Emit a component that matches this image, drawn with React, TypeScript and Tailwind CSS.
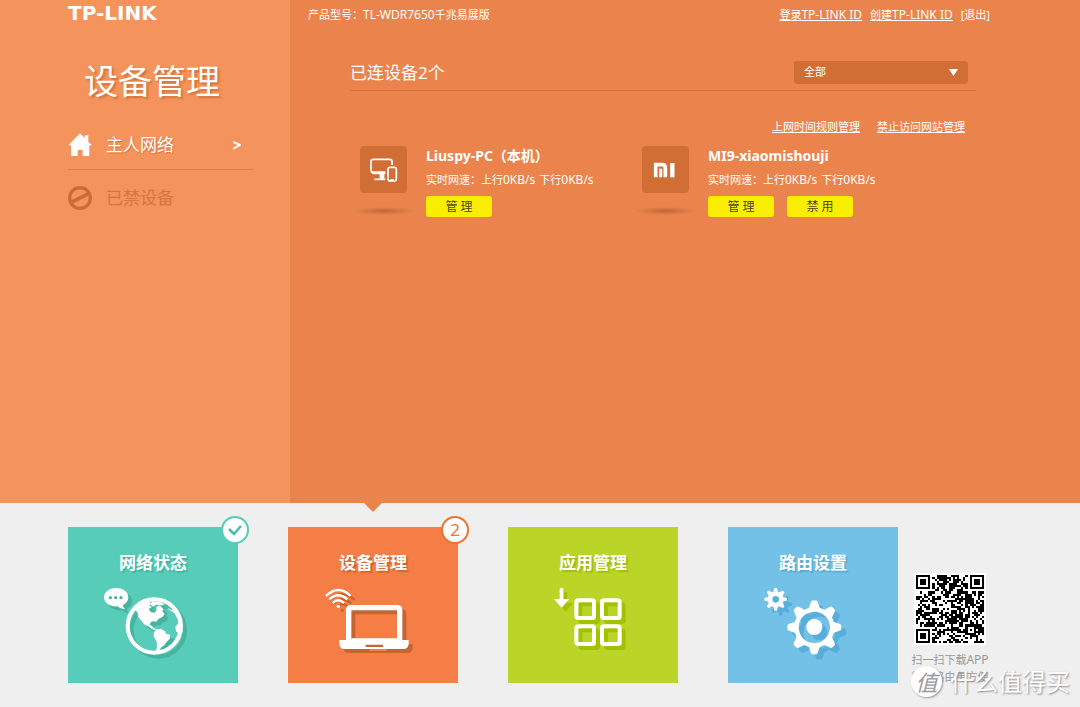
import { useState } from 'react';

import clsx from 'clsx';

// -----------------------------------------------------------------------------
// Icons
// -----------------------------------------------------------------------------

const HomeIcon = () => (
  <svg className="h-6 w-6" viewBox="85 398 72 72" fill="#fff" aria-hidden="true">
    <path d="M121 399 L135 413 V405 H146 V424 L157 435 H149 V467 H129 V449 H114 V467 H94 V435 H86 Z" />
  </svg>
);

const BanIcon = () => (
  <svg className="h-6 w-6" viewBox="0 0 72 72" fill="none" stroke="#ca6d34" aria-hidden="true">
    <circle cx="36" cy="36" r="31" strokeWidth="10" />
    <path d="M10 49 L62 23" strokeWidth="11" />
  </svg>
);

const ComputerIcon = () => (
  <svg className="h-full w-full" viewBox="60 46 141 141" fill="none" stroke="#fff" aria-hidden="true">
    <path d="M156 103 V93 Q156 86 149 86 H100 Q93 86 93 93 V119 Q93 126 100 127 H136" strokeWidth="5" />
    <path d="M95 122 H136 V131 H101 Q95 131 95 122 Z M119 130 H133 V144 H119 Z" fill="#fff" stroke="none" />
    <path d="M103 146 H136" strokeWidth="5" />
    <rect x="144" y="110" width="25" height="41" rx="6" strokeWidth="5" />
    <path d="M151 148 H162" strokeWidth="5" />
  </svg>
);

const MiIcon = () => (
  <svg className="h-full w-full" viewBox="69 46 141 141" fill="none" stroke="#fff" aria-hidden="true">
    <path d="M110 140 V102 H130 Q139 102 139 112 V140" strokeWidth="11" />
    <path d="M125 114 V140" strokeWidth="9" />
    <path d="M160 97 V140" strokeWidth="13" />
  </svg>
);

const GlobeIcon = () => (
  <svg
    className="h-20 w-[120px] drop-shadow-[4px_4px_0_#47b49f]"
    viewBox="129 276 360 240"
    fill="#fff"
    aria-hidden="true"
  >
    <path
      fillRule="evenodd"
      d="M198 294 C219 294 235 306 235 322 C235 332 229 340 219 345 C219 350 221 354 226 358 C217 357 208 354 203 349 C179 351 162 338 162 322 C162 306 178 294 198 294 Z
         M176 323 a5 5 0 1 0 10 0 a5 5 0 1 0 -10 0 Z
         M192 323 a5 5 0 1 0 10 0 a5 5 0 1 0 -10 0 Z
         M208 323 a5 5 0 1 0 10 0 a5 5 0 1 0 -10 0 Z"
    />
    <circle cx="313" cy="408" r="80" fill="none" stroke="#fff" strokeWidth="12" />
    <path d="M248 362 L262 349 L280 339 L296 334 L304 340 L298 348 L306 350 L296 358 L303 367 L314 368 L320 361 L318 351 L329 346 L340 357 L337 364 L344 372 L337 381 L326 386 L318 396 L310 393 L302 397 L299 405 L306 407 L312 415 L321 419 L317 421 L306 417 L294 408 L284 404 L273 391 L264 380 L263 369 L257 361 Z" />
    <path d="M306 334 L330 336 L345 343 L336 346 L318 344 L309 350 L302 344 Z" />
    <path d="M318 419 L333 416 L345 424 L348 431 L361 434 L359 447 L350 455 L343 465 L332 474 L325 487 L317 487 L321 470 L320 455 L311 439 L312 427 Z" />
    <path d="M350 352 L365 361 L372 353 L393 382 L397 404 L397 428 L388 432 L378 424 L376 410 L385 400 L383 386 L373 370 L362 362 Z" />
  </svg>
);

const LaptopIcon = () => (
  <svg
    className="h-20 w-[120px] drop-shadow-[4px_4px_0_#c66532]"
    viewBox="99 276 360 240"
    fill="none"
    stroke="#fff"
    aria-hidden="true"
  >
    <path d="M138 318 Q175 282 212 318" strokeWidth="7" />
    <path d="M148 328 Q175 303 202 328" strokeWidth="7" />
    <path d="M158 339 Q175 323 192 339" strokeWidth="7" />
    <circle cx="175" cy="349" r="5" fill="#fff" stroke="none" />
    <path d="M206 452 V360 Q206 353 213 353 H352 Q359 353 359 360 V452" strokeWidth="16" />
    <path
      fillRule="evenodd"
      fill="#fff"
      stroke="none"
      d="M178 450 H214 V445 H352 V450 H386 V463 Q384 477 371 477 H193 Q180 477 178 463 Z M257 464 V471 H309 V464 Z"
    />
  </svg>
);

const AppsIcon = () => (
  <svg
    className="h-20 w-[120px] drop-shadow-[4px_4px_0_#a2c100]"
    viewBox="99 276 360 240"
    fill="none"
    stroke="#fff"
    strokeWidth="12"
    aria-hidden="true"
  >
    <path d="M179 296 Q185 291 190 296 V327 H208 L185 353 L162 327 H179 Z" fill="#fff" stroke="none" />
    <rect x="229" y="331" width="53" height="53" rx="6" />
    <rect x="306" y="331" width="53" height="53" rx="6" />
    <rect x="229" y="409" width="53" height="53" rx="6" />
    <rect x="306" y="409" width="53" height="53" rx="6" />
  </svg>
);

// Outline of an eight-toothed gear, starting at the top tooth.
const gearPath = (cx: number, cy: number, root: number, tip: number) => {
  const points: string[] = [];
  for (let i = 0; i < 8; i++) {
    const mid = (i * Math.PI) / 4 - Math.PI / 2;
    const corners = [
      [-0.27, root],
      [-0.14, tip - root * 0.08],
      [-0.09, tip],
      [0.09, tip],
      [0.14, tip - root * 0.08],
      [0.27, root],
    ];
    corners.forEach(([offset, r]) => {
      const x = cx + r * Math.cos(mid + offset);
      const y = cy + r * Math.sin(mid + offset);
      points.push(`${x.toFixed(1)} ${y.toFixed(1)}`);
    });
  }
  return `M${points.join(' L')} Z`;
};

const GearsIcon = () => (
  <svg
    className="h-20 w-[120px] drop-shadow-[5px_5px_0_#57aedd]"
    viewBox="129 216 360 240"
    fill="#fff"
    fillRule="evenodd"
    aria-hidden="true"
  >
    <path d={`${gearPath(197, 268, 24, 34)} M187 268 a10 10 0 1 0 20 0 a10 10 0 1 0 -20 0 Z`} />
    <path d={`${gearPath(313, 352, 61, 81)} M266 352 a47 47 0 1 0 94 0 a47 47 0 1 0 -94 0 Z`} />
    <circle cx="313" cy="351" r="24" />
  </svg>
);

const QR_SIZE = 33;

const inFinder = (x: number, y: number) =>
  (x < 8 && y < 8) || (x > QR_SIZE - 9 && y < 8) || (x < 8 && y > QR_SIZE - 9);

const qrModules = () => {
  let d = '';
  let seed = 7650;
  for (let y = 0; y < QR_SIZE; y++) {
    for (let x = 0; x < QR_SIZE; x++) {
      seed = (seed * 1103515245 + 12345) % 2147483648;
      const inAlignment = Math.abs(x - 26) < 3 && Math.abs(y - 26) < 3;
      if (inFinder(x, y) || inAlignment) continue;
      if (seed / 2147483648 < 0.56) d += `M${x} ${y}h1v1h-1z`;
    }
  }
  return d;
};

const QrCode = () => (
  <svg
    className="h-[72px] w-[72px] bg-white p-[2px]"
    viewBox="0 0 33 33"
    role="img"
    aria-label="APP 二维码"
    shapeRendering="crispEdges"
  >
    <path d={qrModules()} />
    {[
      [0, 0],
      [26, 0],
      [0, 26],
    ].map(([x, y]) => (
      <g key={`${x}-${y}`}>
        <rect x={x + 0.5} y={y + 0.5} width="6" height="6" fill="none" stroke="#000" />
        <rect x={x + 2} y={y + 2} width="3" height="3" />
      </g>
    ))}
    <rect x="24.5" y="24.5" width="4" height="4" fill="none" stroke="#000" />
    <rect x="26" y="26" width="1" height="1" />
  </svg>
);

// -----------------------------------------------------------------------------
// Data
// -----------------------------------------------------------------------------

const devices = [
  { name: 'Liuspy-PC（本机）', Icon: ComputerIcon, up: '0KB/s', down: '0KB/s', actions: ['管 理'] },
  { name: 'MI9-xiaomishouji', Icon: MiIcon, up: '0KB/s', down: '0KB/s', actions: ['管 理', '禁 用'] },
];

const tiles = [
  { label: '网络状态', Icon: GlobeIcon, color: 'bg-[#57cdb9] [text-shadow:2px_2px_1px_#47b49f]' },
  { label: '设备管理', Icon: LaptopIcon, color: 'bg-[#f47e45] [text-shadow:2px_2px_1px_#cf6630]' },
  { label: '应用管理', Icon: AppsIcon, color: 'bg-[#bbd428] [text-shadow:2px_2px_1px_#a2bd10]' },
  { label: '路由设置', Icon: GearsIcon, color: 'bg-[#73c1e6] [text-shadow:2px_2px_1px_#5badd6]' },
];

// -----------------------------------------------------------------------------
// Components
// -----------------------------------------------------------------------------

const Sidebar = () => (
  <aside className="w-[290px] shrink-0 bg-[#f4935b] pr-[37px] pl-[68px]">
    <div className="pt-[3px] font-['DejaVu_Sans',sans-serif] text-[20px] leading-5 font-bold">TP-LINK</div>
    <h1 className="mt-8 pl-4 text-[34px] leading-[52px] [text-shadow:2px_2px_2px_#d5733c]">设备管理</h1>
    <nav className="mt-[14px]">
      <a href="#host" className="flex h-[49px] items-center border-b border-[#e57d46] pr-3">
        <HomeIcon />
        <span className="ml-[14px] flex-1 text-[17px] [text-shadow:1px_1px_1px_#d5733c]">主人网络</span>
        <svg className="h-3 w-2" viewBox="0 0 8 12" fill="none" stroke="#fff" strokeWidth="2" aria-hidden="true">
          <path d="M0 3 L7 6 L0 10" />
        </svg>
      </a>
      <a href="#blocked" className="mt-[3px] flex h-[49px] items-center text-[#d4763e]">
        <BanIcon />
        <span className="ml-[14px] text-[17px]">已禁设备</span>
      </a>
    </nav>
  </aside>
);

// Latin text is set one pixel larger than the 11px Chinese text around it.
const Latin = ({ children }: { children: string }) => <span className="text-[12px]">{children}</span>;

const Device = ({ name, Icon, up, down, actions }: (typeof devices)[number]) => (
  <li className="flex w-[282px] gap-[19px]">
    <div className="w-[47px] shrink-0">
      <div className="h-[47px] rounded bg-[#d06e35]">
        <Icon />
      </div>
      <div className="-mx-2 mt-[14px] h-2 bg-[radial-gradient(closest-side,#bd6736,#d47440_45%,transparent)]" />
    </div>
    <div>
      <h3 className="text-[14px] leading-5 font-bold whitespace-nowrap">{name}</h3>
      <p className="mt-[6px] flex gap-1 text-[11px] leading-4 whitespace-nowrap">
        <span>
          实时网速：上行<Latin>{up}</Latin>
        </span>
        <span>
          下行<Latin>{down}</Latin>
        </span>
      </p>
      <div className="mt-2 flex gap-[13px]">
        {actions.map((action) => (
          <button
            key={action}
            type="button"
            className="h-[21px] w-[66px] rounded-[3px] bg-[#faee00] text-[12px] leading-5 text-[#4a4628]"
          >
            {action}
          </button>
        ))}
      </div>
    </div>
  </li>
);

const DevicePanel = () => {
  const [filter, setFilter] = useState('all');

  return (
    <main className="min-w-0 flex-1 bg-[#ea844c]">
      <header className="flex justify-between pt-[7px] pr-[90px] pl-[18px] text-[11px] leading-4">
        <span>
          产品型号：<Latin>TL-WDR7650</Latin>千兆易展版
        </span>
        <div className="flex gap-2">
          <a href="#login" className="underline">
            登录<Latin>TP-LINK ID</Latin>
          </a>
          <a href="#register" className="underline">
            创建<Latin>TP-LINK ID</Latin>
          </a>
          <a href="#logout">[退出]</a>
        </div>
      </header>
      <section className="mt-9 pr-[104px] pl-[60px]">
        <div className="flex h-8 items-center justify-between border-b border-[#d46f39] pr-2 pb-1">
          <h2 className="text-[17px] leading-6">已连设备2个</h2>
          <div className="relative w-[174px]">
            <select
              aria-label="设备筛选"
              value={filter}
              onChange={(e) => setFilter(e.target.value)}
              className="block h-[23px] w-full appearance-none rounded-[3px] bg-[#d06e35] pl-[10px] text-[11px] text-white"
            >
              <option value="all">全部</option>
              <option value="wired">有线</option>
              <option value="wireless">无线</option>
            </select>
            <svg
              className="pointer-events-none absolute top-2 right-[10px] h-[7px] w-[9px]"
              viewBox="0 0 9 7"
              fill="#fff"
              aria-hidden="true"
            >
              <path d="M0 0 H9 L4.5 7 Z" />
            </svg>
          </div>
        </div>
        <div className="mt-7 flex justify-end gap-[17px] pr-[11px] text-[11px] leading-4">
          <a href="#time-rules" className="underline">
            上网时间规则管理
          </a>
          <a href="#site-rules" className="underline">
            禁止访问网站管理
          </a>
        </div>
        <ul className="mt-[11px] flex flex-wrap gap-y-8 pl-[10px]">
          {devices.map((device) => (
            <Device key={device.name} {...device} />
          ))}
        </ul>
      </section>
    </main>
  );
};

const BottomBar = () => {
  const [active] = useState('设备管理');

  return (
    <footer className="flex gap-[13px] bg-[#efefef] pt-6 pr-[91px] pb-6 pl-[68px]">
      <nav className="grid flex-1 grid-cols-4 gap-[50px]">
        {tiles.map(({ label, Icon, color }) => (
          <div key={label} className="relative">
            {label === active && (
              <svg
                className="absolute -top-6 left-1/2 h-[9px] w-[18px] -translate-x-1/2"
                viewBox="0 0 18 9"
                fill="#ea844c"
                aria-hidden="true"
              >
                <path d="M0 0 H18 L9 9 Z" />
              </svg>
            )}
            <button type="button" className={clsx('flex w-full flex-col items-center pt-6 pb-[21px]', color)}>
              <span className="text-[17px] leading-6 font-bold">{label}</span>
              <span className="mt-[7px] block">
                <Icon />
              </span>
            </button>
            {label === '网络状态' && (
              <span className="absolute -top-[11px] -right-[11px] flex h-7 w-7 items-center justify-center rounded-full border-2 border-[#57cdb9] bg-white">
                <svg className="h-4 w-4" viewBox="0 0 16 16" fill="none" stroke="#45bda8" strokeWidth="2.5" aria-hidden="true">
                  <path d="M2 7 L7 12 L14 4" />
                </svg>
              </span>
            )}
            {label === '设备管理' && (
              <span className="absolute -top-[11px] -right-[11px] flex h-7 w-7 items-center justify-center rounded-full border-2 border-[#ec7430] bg-white text-[17px] leading-6 text-[#ec7430]">
                2
              </span>
            )}
          </div>
        ))}
      </nav>
      <div className="flex w-[78px] flex-col items-center pt-[46px] text-[11px] leading-[17px] whitespace-nowrap text-[#999]">
        <QrCode />
        <p className="mt-[6px]">
          扫一扫下载<Latin>APP</Latin>
        </p>
        <p>管理路由更方便</p>
      </div>
    </footer>
  );
};

const Watermark = () => (
  <div className="pointer-events-none absolute right-[10px] bottom-3 flex items-center gap-2 text-[24px] leading-7 [text-shadow:1px_1px_2px_#888]">
    <span className="flex h-[31px] w-[31px] items-center justify-center rounded-full bg-white text-[22px] text-[#999] italic shadow-[1px_1px_2px_#999] [text-shadow:none]">
      值
    </span>
    <span>什么值得买</span>
  </div>
);

export default function App() {
  return (
    <div className="relative flex min-h-screen flex-col font-['Noto_Sans','Noto_Sans_CJK_SC',sans-serif] text-white">
      <div className="flex min-h-[503px] flex-1">
        <Sidebar />
        <DevicePanel />
      </div>
      <BottomBar />
      <Watermark />
    </div>
  );
}
